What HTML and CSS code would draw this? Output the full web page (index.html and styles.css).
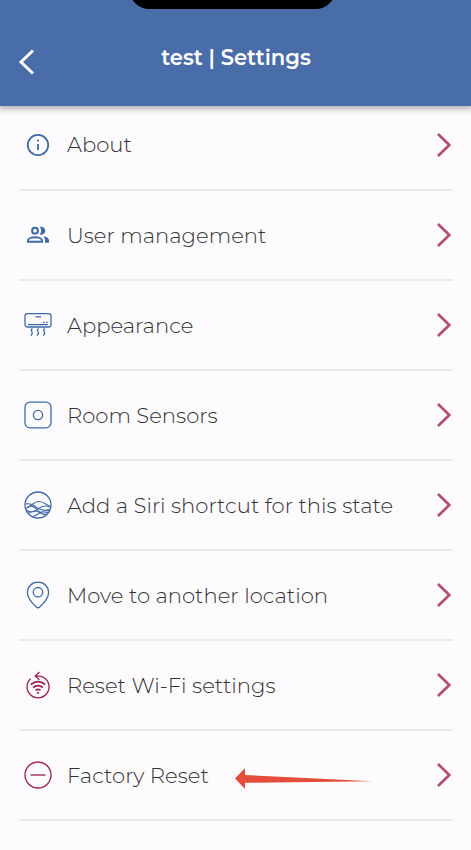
FILE: index.html
```html
<!DOCTYPE html>
<html lang="en">
<head>
    <meta charset="UTF-8">
    <meta name="viewport" content="width=device-width, initial-scale=1.0">
    <title>test | Settings</title>
    <link rel="stylesheet" href="styles.css">
</head>
<body>
    <header class="header">
        <div class="notch"></div>
        <svg class="back" viewBox="0 0 18 28"><path d="M15 2.5 3 14l12 11.5"/></svg>
        <h1>test | Settings</h1>
    </header>

    <ul class="settings">
        <li class="row">
            <svg class="icon" viewBox="0 0 28 28"><g stroke-width="1.8"><circle cx="14" cy="14" r="10.2"/><path d="M14 13v6"/></g><circle class="fill" cx="14" cy="9.5" r="1.1"/></svg>
            <span class="label">About</span>
            <svg class="chevron" viewBox="0 0 16 26"><path d="M2 2l11.3 11L2 24"/></svg>
        </li>
        <li class="row">
            <svg class="icon" viewBox="0 0 28 28"><g stroke-width="2"><circle cx="11" cy="9.7" r="2.9"/><path d="M4 20.7v-1.3c0-2 3.5-3.2 7-3.2s7 1.2 7 3.2v1.3z"/></g><path class="fill" d="M15.7 5.8c3.3-.8 5.6 1.3 5.6 3.9s-2.3 4.7-5.6 3.9c1.9-2.3 1.9-5.5 0-7.8zM19 15.3c3.9.5 6 2 6 4.2v2.2h-4v-2.2c0-1.8-.7-3.2-2-4.2z"/></svg>
            <span class="label">User management</span>
            <svg class="chevron" viewBox="0 0 16 26"><path d="M2 2l11.3 11L2 24"/></svg>
        </li>
        <li class="row">
            <svg class="icon" viewBox="0 0 28 28"><rect x="1" y="2.7" width="26" height="13.3" rx="2.5"/><path d="M4 13.6h20M11.5 5.8h5.5M19 11.4h1.6M22 11.4h1.6"/><path d="M8.400 17.500c-3 2 .6 3.200-.2 5-.3.9-.9 1.500-1.500 2.200M14.600 17.500c-3 2 .6 3.200-.2 5-.3.9-.9 1.500-1.500 2.200M20.800 17.500c-3 2 .6 3.200-.2 5-.3.9-.9 1.500-1.500 2.200"/></svg>
            <span class="label">Appearance</span>
            <svg class="chevron" viewBox="0 0 16 26"><path d="M2 2l11.3 11L2 24"/></svg>
        </li>
        <li class="row">
            <svg class="icon" viewBox="0 0 28 28"><rect x="1" y="1.2" width="26" height="25.6" rx="5"/><circle cx="14" cy="14" r="4.6"/></svg>
            <span class="label">Room Sensors</span>
            <svg class="chevron" viewBox="0 0 16 26"><path d="M2 2l11.3 11L2 24"/></svg>
        </li>
        <li class="row">
            <svg class="icon" viewBox="0 0 28 28"><circle cx="14" cy="14" r="13"/><g stroke-width="1.1"><path d="M1.5 13c4.5-1 8 .8 11 3.3s7.5 3.7 13.3 2.3"/><path d="M1.5 17.5c5.5-1 7.500-7 13.500-7 5.500 0 7 4 11.800 5"/><path d="M2 19c4 3 8.500 2 12-1s8-4 12.500-1.500"/><path d="M3.500 16c4-2 7-.5 9.500 2.500s7 4.500 11.500 2.500"/><path d="M4.500 22.500c4-3 8-3.500 12-.5 2 1.500 4 2 6 1.500"/><path d="M9 25.500c5-1 7-6.500 16.500-6"/></g></svg>
            <span class="label">Add a Siri shortcut for this state</span>
            <svg class="chevron" viewBox="0 0 16 26"><path d="M2 2l11.3 11L2 24"/></svg>
        </li>
        <li class="row">
            <svg class="icon" viewBox="0 0 28 28"><path d="M14 1.2c-6.3 0-10.6 4.6-10.6 10.3 0 5.6 4 10 9 14.6q1.6 1.4 3.2 0c5-4.6 9-9 9-14.6C24.6 5.8 20.3 1.2 14 1.2z"/><circle cx="14" cy="11.2" r="4.7"/></svg>
            <span class="label">Move to another location</span>
            <svg class="chevron" viewBox="0 0 16 26"><path d="M2 2l11.3 11L2 24"/></svg>
        </li>
        <li class="row">
            <svg class="icon danger" viewBox="0 0 28 28"><path d="M6.6 7.8A11 11 0 1 0 21.5 7.8C19.3 5.7 16 4.8 11.5 4.9M15.5 1l-4.3 3.9 4.2 3.9"/><g stroke-width="1.7"><path d="M6.800 13.500q7.200-5.600 14.400 0M9.100 16.500q4.900-3.800 9.800 0M11.500 19.200q2.500-1.800 5 0"/></g><circle class="fill" cx="14" cy="21.8" r="1.1"/></svg>
            <span class="label">Reset Wi-Fi settings</span>
            <svg class="chevron" viewBox="0 0 16 26"><path d="M2 2l11.3 11L2 24"/></svg>
        </li>
        <li class="row">
            <svg class="icon danger" viewBox="0 0 28 28"><circle cx="14" cy="14" r="13"/><path d="M6.5 14h15"/></svg>
            <span class="label">Factory Reset</span>
            <svg class="pointer" viewBox="0 0 138 22"><path d="M0 10.5 10 0v7l127 6.300L10 14.800V21z"/></svg>
            <svg class="chevron" viewBox="0 0 16 26"><path d="M2 2l11.3 11L2 24"/></svg>
        </li>
    </ul>
</body>
</html>
```
FILE: styles.css
```css
* {
    box-sizing: border-box;
}
body {
    margin: 0;
    height: 850px;
    overflow: hidden;
    background-color: #fdfbfe;
    font-family: Montserrat, Inter, sans-serif;
}
.header {
    position: relative;
    height: 106px;
    padding: 44px 18px 0;
    display: flex;
    align-items: flex-start;
    background-color: #496da9;
    box-shadow: 0 1px 6px 2px rgba(70, 55, 60, 0.4);
}
.notch {
    position: absolute;
    top: -32px;
    left: 129px;
    width: 207px;
    height: 41px;
    border-radius: 22px;
    background-color: #000;
}
.back {
    width: 18px;
    height: 28px;
    margin-top: 4px;
    fill: none;
    stroke: #fff;
    stroke-width: 3;
}
h1 {
    flex: 1;
    margin: 0 17px 0 0;
    color: #fff;
    font-size: 21.1px;
    font-weight: 600;
    line-height: 28px;
    text-align: center;
    white-space: nowrap;
}
.settings {
    margin: 0;
    padding: 0 18px 0 19px;
    list-style: none;
}
.row {
    display: flex;
    align-items: center;
    height: 90.1px;
    border-bottom: 2px solid #eceaee;
}
.row:first-child {
    height: 84.6px;
    padding-bottom: 4px;
}
.icon {
    width: 28px;
    height: 28px;
    margin: 0 15px 0 5px;
    flex: none;
    fill: none;
    stroke: #3f69a6;
    stroke-width: 1.3;
    color: #3f69a6;
}
.icon.danger {
    stroke: #9b204d;
    color: #9b204d;
}
.icon .fill {
    fill: currentColor;
    stroke: none;
}
.label {
    padding-top: 2px;
    color: #333136;
    font-size: 21.15px;
    font-weight: 300;
    line-height: 28px;
    white-space: nowrap;
}
.row:first-child .label {
    padding-top: 0;
}
.chevron {
    width: 16px;
    height: 26px;
    margin-left: auto;
    margin-right: 1px;
    flex: none;
    fill: none;
    stroke: #b24e73;
    stroke-width: 2.7;
}
.pointer {
    width: 138px;
    height: 22px;
    margin: 7px 0 0 26px;
    fill: #e44d3a;
}
```
